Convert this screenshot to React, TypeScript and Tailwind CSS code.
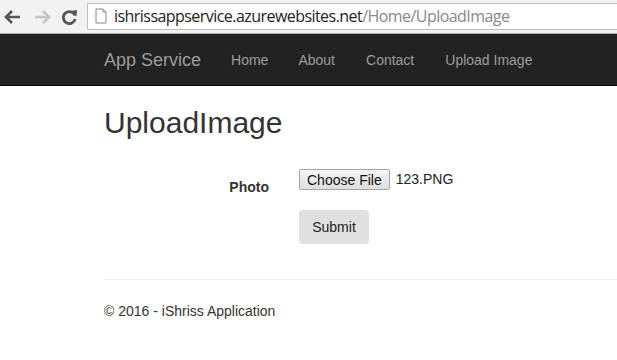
import React from "react";

export default function App() {
  return (
    <div className="w-[617px] h-[360px] overflow-hidden bg-white" style={{ fontFamily: '"Liberation Sans", Arial, sans-serif' }}>
      {/* Browser chrome */}
      <div className="h-[34px] bg-[#f2f2f2] border-b border-[#a9a9a9] flex items-center">
        <div className="flex items-center w-[87px] pl-[3px]">
          <svg width="18" height="16" viewBox="0 0 18 16" className="ml-[1px]">
            <path d="M8 2 L2 8 L8 14 M2 8 H16" stroke="#555" strokeWidth="2.6" fill="none" />
          </svg>
          <svg width="18" height="16" viewBox="0 0 18 16" className="ml-[11px]">
            <path d="M10 2 L16 8 L10 14 M16 8 H2" stroke="#c4c4c4" strokeWidth="2.6" fill="none" />
          </svg>
          <svg width="18" height="18" viewBox="0 0 18 18" className="ml-[10px]">
            <path d="M14 7.5 A6 6 0 1 0 14.2 11" stroke="#555" strokeWidth="2.8" fill="none" />
            <path d="M10 3 L16 2 L15.5 8.5 Z" fill="#555" />
          </svg>
        </div>
        <div className="flex-1 h-[27px] mt-[-1px] bg-white border border-[#bdbdbd] border-r-0 rounded-l-[2px] flex items-center">
          <svg width="14" height="16" viewBox="0 0 14 16" className="ml-[6px]">
            <path d="M2 1 H9 L12 4 V15 H2 Z M9 1 V4 H12" stroke="#888" strokeWidth="1" fill="#fff" />
          </svg>
          <span className="ml-[6px] text-[16px] leading-none text-[#222]" style={{ fontFamily: '"Open Sans", sans-serif', letterSpacing: '-0.55px' }}>
            ishrissappservice.azurewebsites.net<span className="text-[#888]">/Home/UploadImage</span>
          </span>
        </div>
      </div>
      {/* Navbar */}
      <div className="h-[52px] bg-[#222] border-b border-[#080808] flex items-center pl-[104px]">
        <span className="text-[18px] text-[#9d9d9d] mt-[1px]">App Service</span>
        <div className="flex items-center text-[14px] text-[#9d9d9d] ml-[30px] gap-[30px] mt-[2px]">
          <span>Home</span>
          <span>About</span>
          <span className="ml-[1px]">Contact</span>
          <span className="ml-[1px]">Upload Image</span>
        </div>
      </div>
      {/* Content */}
      <div className="pl-[104px]">
        <h2 className="text-[30px] text-[#333] leading-[33px] mt-[20px]">UploadImage</h2>
        <div className="flex items-start mt-[30px] text-[14px] text-[#333]">
          <div className="w-[165px] text-right font-bold pt-[8px]">Photo</div>
          <div className="ml-[30px] flex flex-col">
            <div className="flex items-center">
              <button className="h-[21px] px-[7px] text-[14px] text-[#111] bg-gradient-to-b from-[#f5f5f5] to-[#dedede] border border-[#a6a6a6] rounded-[2px] leading-none">Choose File</button>
              <span className="ml-[6px] text-[14px] text-[#222]">123.PNG</span>
            </div>
            <button className="mt-[20px] w-[70px] h-[34px] bg-[#e0e0e0] rounded-[4px] text-[14px] text-[#222]">Submit</button>
          </div>
        </div>
        <div className="mt-[35px] border-t border-[#eee]" />
        <div className="mt-[21px] text-[14px] text-[#333]">© 2016 - iShriss Application</div>
      </div>
    </div>
  );
}
